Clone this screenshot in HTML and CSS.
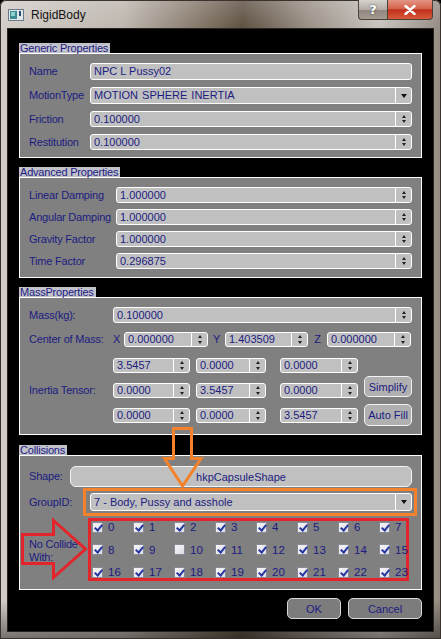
FILE: index.html
```html
<!DOCTYPE html>
<html>
<head>
<meta charset="utf-8">
<title>RigidBody</title>
<link rel="stylesheet" href="styles.css">
</head>
<body>
<div class="window">
  <div class="titlebar">
    <svg class="app-icon" width="16" height="12" viewBox="0 0 16 12">
      <rect x="0.5" y="0.5" width="15" height="11" fill="#dfe6ea" stroke="#6b7a84"/>
      <rect x="2" y="2" width="7" height="8" fill="#3c8c96"/>
      <rect x="3" y="3" width="4" height="4" fill="#8fd0c8"/>
      <rect x="11" y="2" width="2" height="5" fill="#2d4d70"/>
    </svg>
    <span class="title">RigidBody</span>
    <div class="caption">
      <div class="cap-btn help">?</div>
      <div class="cap-btn close">
        <svg width="12" height="10" viewBox="0 0 12 10"><path d="M1.5,1 L10.5,9 M10.5,1 L1.5,9" stroke="#fff" stroke-width="2.4" stroke-linecap="round"/></svg>
      </div>
    </div>
  </div>

  <div class="client">
    <!-- Generic -->
    <div class="group">
      <div class="group-head"><span class="group-title">Generic Properties</span></div>
      <div class="box box-generic">
        <div class="form form-generic">
          <span class="lbl">Name</span>
          <div class="field h17"><span class="val">NPC L Pussy02</span></div>
          <span class="lbl">MotionType</span>
          <div class="field h17"><span class="val motion">MOTION SPHERE INERTIA</span><span class="drop"><i class="tri-down"></i></span></div>
          <span class="lbl">Friction</span>
          <div class="field h16"><span class="val">0.100000</span><span class="spinb"><i class="tri-up"></i><i class="tri-dn"></i></span></div>
          <span class="lbl">Restitution</span>
          <div class="field h16"><span class="val">0.100000</span><span class="spinb"><i class="tri-up"></i><i class="tri-dn"></i></span></div>
        </div>
      </div>
    </div>

    <!-- Advanced -->
    <div class="group">
      <div class="group-head"><span class="group-title">Advanced Properties</span></div>
      <div class="box box-adv">
        <div class="form form-adv">
          <span class="lbl">Linear Damping</span>
          <div class="field h16"><span class="val">1.000000</span><span class="spinb"><i class="tri-up"></i><i class="tri-dn"></i></span></div>
          <span class="lbl">Angular Damping</span>
          <div class="field h16"><span class="val">1.000000</span><span class="spinb"><i class="tri-up"></i><i class="tri-dn"></i></span></div>
          <span class="lbl">Gravity Factor</span>
          <div class="field h16"><span class="val">1.000000</span><span class="spinb"><i class="tri-up"></i><i class="tri-dn"></i></span></div>
          <span class="lbl">Time Factor</span>
          <div class="field h16"><span class="val">0.296875</span><span class="spinb"><i class="tri-up"></i><i class="tri-dn"></i></span></div>
        </div>
      </div>
    </div>

    <!-- Mass -->
    <div class="group">
      <div class="group-head"><span class="group-title">MassProperties</span></div>
      <div class="box box-mass">
        <div class="row-mass">
          <span class="lbl w84">Mass(kg):</span>
          <div class="field h16 grow"><span class="val">0.100000</span><span class="spinb"><i class="tri-up"></i><i class="tri-dn"></i></span></div>
        </div>
        <div class="row-com">
          <span class="lbl w83">Center of Mass:</span>
          <span class="lbl axis ax-x">X</span>
          <div class="field h15 w84"><span class="val">0.000000</span><span class="spinb"><i class="tri-up"></i><i class="tri-dn"></i></span></div>
          <span class="lbl axis ax-y">Y</span>
          <div class="field h15 w83"><span class="val">1.403509</span><span class="spinb"><i class="tri-up"></i><i class="tri-dn"></i></span></div>
          <span class="lbl axis ax-z">Z</span>
          <div class="field h15 w84"><span class="val">0.000000</span><span class="spinb"><i class="tri-up"></i><i class="tri-dn"></i></span></div>
        </div>
        <div class="inertia">
          <span class="lbl inertia-lbl">Inertia Tensor:</span>
          <div class="field h15 c1 r1"><span class="val">3.5457</span><span class="spinb"><i class="tri-up"></i><i class="tri-dn"></i></span></div>
          <div class="field h15 c2 r1"><span class="val">0.0000</span><span class="spinb"><i class="tri-up"></i><i class="tri-dn"></i></span></div>
          <div class="field h15 c3 r1"><span class="val">0.0000</span><span class="spinb"><i class="tri-up"></i><i class="tri-dn"></i></span></div>
          <div class="field h15 c1 r2"><span class="val">0.0000</span><span class="spinb"><i class="tri-up"></i><i class="tri-dn"></i></span></div>
          <div class="field h15 c2 r2"><span class="val">3.5457</span><span class="spinb"><i class="tri-up"></i><i class="tri-dn"></i></span></div>
          <div class="field h15 c3 r2"><span class="val">0.0000</span><span class="spinb"><i class="tri-up"></i><i class="tri-dn"></i></span></div>
          <div class="field h15 c1 r3"><span class="val">0.0000</span><span class="spinb"><i class="tri-up"></i><i class="tri-dn"></i></span></div>
          <div class="field h15 c2 r3"><span class="val">0.0000</span><span class="spinb"><i class="tri-up"></i><i class="tri-dn"></i></span></div>
          <div class="field h15 c3 r3"><span class="val">3.5457</span><span class="spinb"><i class="tri-up"></i><i class="tri-dn"></i></span></div>
          <div class="side-btns">
            <div class="push simplify">Simplify</div>
            <div class="push autofill">Auto Fill</div>
          </div>
        </div>
      </div>
    </div>

    <!-- Collisions -->
    <div class="group">
      <div class="group-head"><span class="group-title">Collisions</span></div>
      <div class="box box-col">
        <div class="row-shape">
          <span class="lbl w41">Shape:</span>
          <div class="shape-btn">hkpCapsuleShape</div>
        </div>
        <div class="row-group">
          <span class="lbl w54">GroupID:</span>
          <div class="orange-wrap">
            <div class="field h18"><span class="val">7 - Body, Pussy and asshole</span><span class="drop"><i class="tri-down"></i></span></div>
          </div>
        </div>
        <div class="row-nc">
          <span class="lbl nc-lbl">No Collide<br>With:</span>
          <div class="cb-grid">
            <div class="cb"><i class="cbx on"></i><span>0</span></div>
            <div class="cb"><i class="cbx on"></i><span>1</span></div>
            <div class="cb"><i class="cbx on"></i><span>2</span></div>
            <div class="cb"><i class="cbx on"></i><span>3</span></div>
            <div class="cb"><i class="cbx on"></i><span>4</span></div>
            <div class="cb"><i class="cbx on"></i><span>5</span></div>
            <div class="cb"><i class="cbx on"></i><span>6</span></div>
            <div class="cb"><i class="cbx on"></i><span>7</span></div>
            <div class="cb"><i class="cbx on"></i><span>8</span></div>
            <div class="cb"><i class="cbx on"></i><span>9</span></div>
            <div class="cb"><i class="cbx"></i><span>10</span></div>
            <div class="cb"><i class="cbx on"></i><span>11</span></div>
            <div class="cb"><i class="cbx on"></i><span>12</span></div>
            <div class="cb"><i class="cbx on"></i><span>13</span></div>
            <div class="cb"><i class="cbx on"></i><span>14</span></div>
            <div class="cb"><i class="cbx on"></i><span>15</span></div>
            <div class="cb"><i class="cbx on"></i><span>16</span></div>
            <div class="cb"><i class="cbx on"></i><span>17</span></div>
            <div class="cb"><i class="cbx on"></i><span>18</span></div>
            <div class="cb"><i class="cbx on"></i><span>19</span></div>
            <div class="cb"><i class="cbx on"></i><span>20</span></div>
            <div class="cb"><i class="cbx on"></i><span>21</span></div>
            <div class="cb"><i class="cbx on"></i><span>22</span></div>
            <div class="cb"><i class="cbx on"></i><span>23</span></div>
          </div>
        </div>
      </div>
    </div>

    <div class="dialog-btns">
      <div class="push dlg ok">OK</div>
      <div class="push dlg cancel">Cancel</div>
    </div>

    <svg class="annot" width="441" height="639" viewBox="0 0 441 639">
      <path d="M173.5,428.5 H191.5 V458.5 H201 L182.5,486 L164.5,458.5 H173.5 Z" fill="none" stroke="#f5822a" stroke-width="3" stroke-linejoin="miter"/>
      <path d="M22.5,534.5 H53.5 V520.5 L85.5,549 L53.5,577.5 V563.5 H22.5 Z" fill="none" stroke="#e3242b" stroke-width="3" stroke-linejoin="miter"/>
    </svg>
  </div>
</div>
</body>
</html>
```

FILE: styles.css
```css
* { box-sizing: border-box; }
html, body { margin: 0; padding: 0; }
body {
  width: 441px;
  height: 639px;
  overflow: hidden;
  background: #000;
  font-family: "Liberation Sans", Arial, sans-serif;
}

.window {
  width: 441px;
  height: 639px;
  display: flex;
  flex-direction: column;
  border-radius: 6px 6px 0 0;
  background:
    linear-gradient(180deg, rgba(255,255,255,0.18) 0px, rgba(255,255,255,0) 28px, rgba(0,0,0,0) 600px, rgba(0,0,0,0.45) 639px),
    linear-gradient(90deg, #d2cdc8 0%, #bdb6ae 28%, #7e7062 47%, #5f5143 55%, #9a9086 70%, #c8c3be 86%, #948b82 100%);
  box-shadow: inset 0 0 0 1px #3a332d;
}

/* Title bar */
.titlebar {
  height: 29px;
  display: flex;
  align-items: flex-start;
  padding: 0 8px 0 8px;
}
.app-icon { margin-top: 9px; flex: none; }
.title {
  margin-left: 7px;
  margin-top: 8px;
  font-size: 12px;
  line-height: 14px;
  color: #141414;
}
.caption { margin-left: auto; display: flex; }
.cap-btn {
  height: 20px;
  display: flex;
  align-items: center;
  justify-content: center;
  border: 1px solid #4a4038;
  border-top: none;
}
.help {
  width: 29px;
  border-radius: 0 0 0 4px;
  border-right: none;
  background: linear-gradient(180deg, #d6d2ce 0%, #b4aca5 50%, #8f867e 52%, #a39a92 100%);
  color: #fff;
  font: bold 13px "DejaVu Sans", sans-serif;
  text-shadow: 0 0 2px #333;
}
.close {
  width: 46px;
  border-radius: 0 0 4px 0;
  background: linear-gradient(180deg, #e49484 0%, #d4644e 45%, #c0301a 52%, #d85a3c 100%);
}

/* Client area */
.client {
  position: relative;
  height: 602px;
  margin: 0 8px;
  background: #000;
  padding: 14px 11px 0 11px;
  box-shadow: 0 0 0 1px #2a241f;
}

.group + .group { margin-top: 9px; }
.group:nth-child(4) { margin-top: 10px; }

.group-head { display: flex; height: 10px; }
.group-title {
  height: 10px;
  line-height: 10px;
  font-size: 11px;
  letter-spacing: -0.2px;
  padding: 0 2px 0 1px;
  background: #c2c2ca;
  color: #1c1c84;
  white-space: nowrap;
}

.box {
  border: 1px solid #fff;
  background: #808080;
  padding: 9px 9px 8px 9px;
}
.box-generic { padding-bottom: 7px; }
.box-mass { padding-bottom: 11px; }
.box-col { padding-top: 10px; padding-bottom: 8px; }

.lbl {
  font-size: 11px;
  letter-spacing: -0.2px;
  color: #1c1c80;
  white-space: nowrap;
  line-height: 13px;
}

.form {
  display: grid;
  align-items: center;
}
.form-generic { grid-template-columns: 61px 1fr; row-gap: 7px; }
.form-adv { grid-template-columns: 87px 1fr; row-gap: 6px; }

/* Fields */
.field {
  position: relative;
  display: flex;
  align-items: center;
  background: #c0c0c0;
  border: 1px solid #fff;
  border-radius: 3px;
  padding-left: 3px;
  color: #1c1c80;
  font-size: 11px;
  overflow: hidden;
}
.h15 { height: 15px; }
.h16 { height: 16px; }
.h17 { height: 17px; }
.h18 { height: 18px; }
.grow { flex: 1; }
.w83 { width: 83px; flex: none; }
.w84 { width: 84px; flex: none; }
.w41 { width: 41px; flex: none; }
.w54 { width: 54px; flex: none; }

.val {
  flex: 1;
  white-space: nowrap;
  overflow: hidden;
  line-height: 13px;
}
.motion { word-spacing: 1px; }

.drop, .spinb {
  flex: none;
  width: 16px;
  height: 100%;
  border-left: 1px solid #fff;
  display: flex;
  align-items: center;
  justify-content: center;
}
.spinb {
  flex-direction: column;
  justify-content: space-evenly;
}
.tri-down {
  display: block;
  width: 0; height: 0;
  border-left: 3.5px solid transparent;
  border-right: 3.5px solid transparent;
  border-top: 4px solid #111;
}
.tri-up, .tri-dn {
  display: block;
  width: 0; height: 0;
  border-left: 2.5px solid transparent;
  border-right: 2.5px solid transparent;
}
.tri-up { border-bottom: 3px solid #222; }
.tri-dn { border-top: 3px solid #222; }

/* Mass group */
.row-mass { display: flex; align-items: center; }
.row-com {
  display: flex;
  align-items: center;
  margin-top: 9px;
}
.axis { text-align: center; flex: none; }
.ax-x { width: 12px; text-align: left; padding-left: 1px; }
.ax-y { width: 17px; }
.ax-z { width: 19px; }

.inertia {
  margin-top: 11px;
  display: grid;
  grid-template-columns: 84px 83px 84px 84px 1fr;
  grid-template-rows: 15px 15px 15px;
  row-gap: 10px;
}
.inertia-lbl { grid-column: 1; grid-row: 2; align-self: center; }
.c1 { grid-column: 2; width: 77px; }
.c2 { grid-column: 3; width: 70px; }
.c3 { grid-column: 4; width: 78px; }
.r1 { grid-row: 1; }
.r2 { grid-row: 2; }
.r3 { grid-row: 3; }

.side-btns {
  grid-column: 5;
  grid-row: 1 / 4;
  height: 65px;
  padding-top: 18px;
  display: flex;
  flex-direction: column;
  gap: 7px;
}
.push {
  display: flex;
  align-items: center;
  justify-content: center;
  border: 1px solid #f2f2f2;
  border-radius: 5px;
  color: #1c1c80;
  font-size: 11px;
  white-space: nowrap;
}
.simplify, .autofill { background: #b0b0b0; flex: none; }
.simplify { height: 21px; }
.autofill { height: 22px; }

/* Collisions */
.row-shape { display: flex; align-items: center; }
.shape-btn {
  flex: 1;
  height: 21px;
  background: #c0c0c0;
  border: 1px solid #f4f4f4;
  border-radius: 6px;
  display: flex;
  align-items: center;
  justify-content: center;
  color: #1c1c80;
  font-size: 11px;
}
.row-group {
  display: flex;
  align-items: center;
  margin-top: 1px;
}
.orange-wrap {
  flex: 1;
  margin-right: -5px;
  border: 3px solid #f5822a;
  padding: 2px 2px 2px 4px;
}
.row-nc {
  display: flex;
  align-items: center;
  margin-top: 2px;
}
.nc-lbl {
  width: 59px;
  flex: none;
  padding-top: 2px;
}
.cb-grid {
  width: 321px;
  border: 3px solid #e3242b;
  padding: 0 0 0 1px;
  display: grid;
  grid-template-columns: repeat(7, 41px) 1fr;
  grid-auto-rows: 12px;
  row-gap: 10.5px;
}
.cb {
  display: flex;
  align-items: center;
  gap: 5px;
  color: #1c1c80;
  font-size: 11.5px;
  white-space: nowrap;
}
.cbx {
  position: relative;
  display: block;
  flex: none;
  width: 11px;
  height: 11px;
  border: 1px solid #8a8a94;
  background: linear-gradient(135deg, #f6f6f8 0%, #dcdce4 100%);
}
.cbx.on::after {
  content: "";
  position: absolute;
  left: 3px;
  top: 0px;
  width: 3px;
  height: 6px;
  border-right: 2px solid #2636a0;
  border-bottom: 2px solid #2636a0;
  transform: rotate(40deg);
}

/* Dialog buttons */
.dialog-btns {
  display: flex;
  justify-content: flex-end;
  gap: 7px;
  margin-top: 8px;
}
.dlg {
  height: 21px;
  background: #7c7c7c;
  border-color: #d8d8d8;
}
.ok { width: 54px; }
.cancel { width: 74px; }

/* Annotation overlay (arrows drawn over the dialog) */
.annot {
  position: absolute;
  left: -8px;
  top: -29px;
  pointer-events: none;
}
```
